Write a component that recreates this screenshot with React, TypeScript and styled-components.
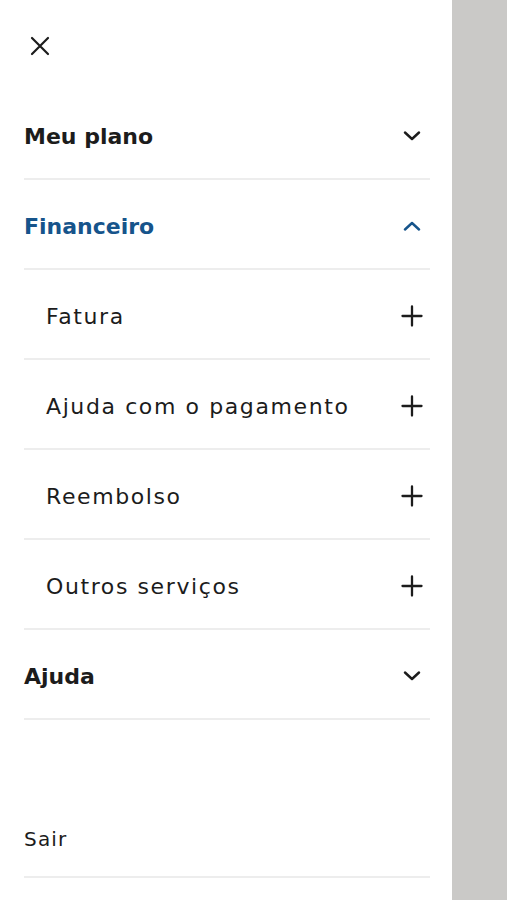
import React, { FC, useState } from "react";
import styled, { createGlobalStyle } from "styled-components";

const colors = {
  text: "#1c1c1c",
  blue: "#16548b",
  divider: "#ededed",
  overlay: "#cac9c7",
  white: "#ffffff",
};

const GlobalStyle = createGlobalStyle`
  html, body {
    margin: 0;
    padding: 0;
    background: ${colors.white};
  }
  body {
    font-family: "DejaVu Sans", "Noto Sans", sans-serif;
    color: ${colors.text};
  }
`;

const ChevronIcon: FC<{ up?: boolean; color: string }> = ({ up, color }) => (
  <svg width="18" height="10" viewBox="0 0 18 10" fill="none">
    <path
      d={up ? "M2 8.5L9 2L16 8.5" : "M2 1.5L9 8L16 1.5"}
      stroke={color}
      strokeWidth="2.4"
      strokeLinecap="round"
      strokeLinejoin="round"
    />
  </svg>
);

const PlusIcon: FC = () => (
  <svg width="22" height="22" viewBox="0 0 22 22" fill="none">
    <path
      d="M11 1.5V20.5M1.5 11H20.5"
      stroke={colors.text}
      strokeWidth="2.3"
      strokeLinecap="round"
    />
  </svg>
);

const CloseIcon: FC = () => (
  <svg width="20" height="20" viewBox="0 0 20 20" fill="none">
    <path
      d="M2 2L18 18M18 2L2 18"
      stroke={colors.text}
      strokeWidth="2.2"
      strokeLinecap="round"
    />
  </svg>
);

const subItems = ["Fatura", "Ajuda com o pagamento", "Reembolso", "Outros serviços"];

const App: FC = () => {
  const [open, setOpen] = useState<string>("Financeiro");

  const toggle = (name: string) => setOpen(open === name ? "" : name);

  return (
    <>
      <GlobalStyle />
      <Screen>
        <Drawer>
          <Header>
            <CloseButton aria-label="Fechar">
              <CloseIcon />
            </CloseButton>
          </Header>

          <Section onClick={() => toggle("Meu plano")}>
            <SectionTitle active={open === "Meu plano"}>Meu plano</SectionTitle>
            <IconSlot>
              <ChevronIcon up={open === "Meu plano"} color={open === "Meu plano" ? colors.blue : colors.text} />
            </IconSlot>
          </Section>

          <Section onClick={() => toggle("Financeiro")}>
            <SectionTitle active={open === "Financeiro"}>Financeiro</SectionTitle>
            <IconSlot>
              <ChevronIcon up={open === "Financeiro"} color={open === "Financeiro" ? colors.blue : colors.text} />
            </IconSlot>
          </Section>

          {open === "Financeiro" &&
            subItems.map((item) => (
              <SubItem key={item}>
                <SubTitle>{item}</SubTitle>
                <IconSlot>
                  <PlusIcon />
                </IconSlot>
              </SubItem>
            ))}

          <Section onClick={() => toggle("Ajuda")}>
            <SectionTitle active={open === "Ajuda"}>Ajuda</SectionTitle>
            <IconSlot>
              <ChevronIcon up={open === "Ajuda"} color={open === "Ajuda" ? colors.blue : colors.text} />
            </IconSlot>
          </Section>

          <LogoutRow>
            <LogoutText>Sair</LogoutText>
          </LogoutRow>
        </Drawer>
        <Overlay />
      </Screen>
    </>
  );
};

export default App;

const Screen = styled.div`
  display: flex;
  flex-direction: row;

  width: 100%;
  height: 900px;
  overflow: hidden;
`;

const Drawer = styled.nav`
  display: flex;
  flex-direction: column;

  width: 452px;
  padding: 0 22px 0 24px;
  box-sizing: border-box;

  background-color: ${colors.white};
`;

const Overlay = styled.div`
  flex: 1;

  background-color: ${colors.overlay};
`;

const Header = styled.div`
  display: flex;
  align-items: center;

  height: 90px;
`;

const CloseButton = styled.button`
  display: flex;
  align-items: center;
  justify-content: center;

  width: 24px;
  height: 24px;
  margin-left: 4px;
  margin-top: 2px;
  padding: 0;

  border: none;
  background: none;
  cursor: pointer;
`;

const Row = styled.div`
  display: flex;
  align-items: center;
  justify-content: space-between;

  height: 90px;
  padding-top: 4px;
  box-sizing: border-box;

  border-bottom: 2px solid ${colors.divider};
  cursor: pointer;
`;

const Section = styled(Row)``;

const SubItem = styled(Row)`
  padding-left: 22px;
`;

const SectionTitle = styled.span<{ active?: boolean }>`
  font-size: 22px;
  font-weight: 700;
  color: ${(p) => (p.active ? colors.blue : colors.text)};
`;

const SubTitle = styled.span`
  font-size: 22px;
  font-weight: 400;
  letter-spacing: 1.6px;
  color: ${colors.text};
`;

const IconSlot = styled.span`
  display: flex;
  align-items: center;
  justify-content: center;

  width: 28px;
  margin-right: 4px;
`;

const LogoutRow = styled.div`
  display: flex;
  align-items: center;

  height: 80px;
  margin-top: 78px;
  padding-top: 4px;
  box-sizing: border-box;

  border-bottom: 2px solid ${colors.divider};
`;

const LogoutText = styled.span`
  font-size: 20px;
  letter-spacing: 1.2px;
  color: ${colors.text};
`;
